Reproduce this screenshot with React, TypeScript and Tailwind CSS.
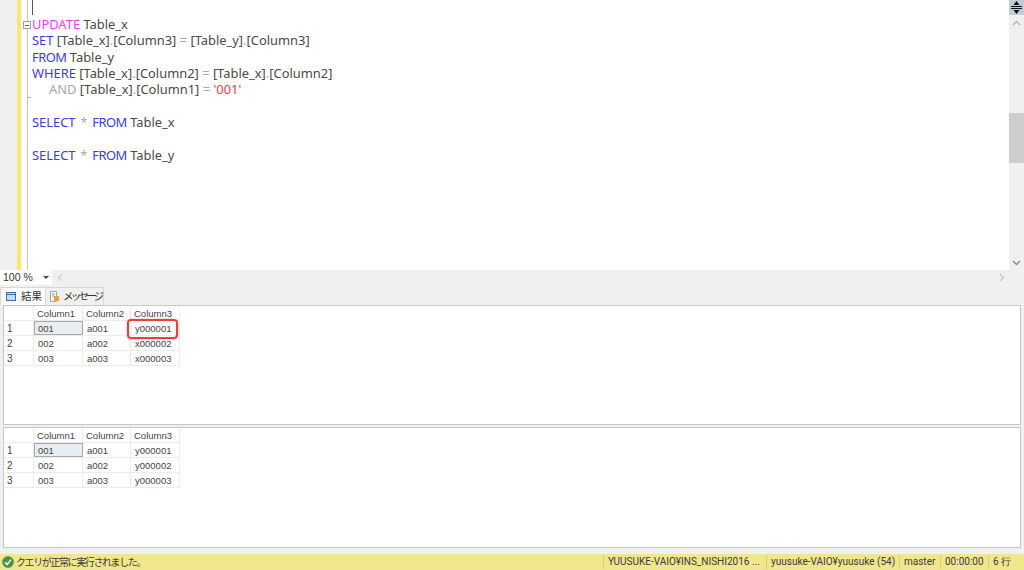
const kw = 'text-[#3a3af5]';
const plain = 'text-[#4a4a4a]';
const op = 'text-[#a8a8a8]';

function Code({ children, indent }: { children?: React.ReactNode; indent?: boolean }) {
  return <div className={`h-[16.35px] leading-[16.35px] whitespace-pre ${indent ? 'pl-[17px]' : ''}`}>{children}</div>;
}

function From() {
  return <span className={`${kw} tracking-[-0.5px]`}>FROM</span>;
}

function Editor() {
  return (
    <div className="flex h-[270px] bg-white">
      <div className="w-[17px] bg-[#f0f0f0]" />
      <div className="w-[4px] bg-[#f7e96b]" />
      <div className="relative w-[6px]">
        <div className="absolute z-10 left-[2px] top-[21px] w-[8px] h-[8px] border border-[#a0a0a0] bg-white flex items-center justify-center">
          <div className="w-[4px] h-px bg-[#606060]" />
        </div>
      </div>
      <div className="relative flex-1 border-l border-[#c4c4c4] pl-[4px] font-['Noto_Sans',sans-serif] text-[12.9px]">
        <div className="absolute left-0 top-[97px] w-[3px] h-px bg-[#b0b0b0]" />
        <div className="absolute left-[4px] top-0 w-px h-[15px] bg-[#555]" />
        <div className="h-[16px]" />
        <Code><span className="text-[#f53cf0]">UPDATE</span> <span className={plain}>Table_x</span></Code>
        <Code><span className={kw}>SET</span> <span className={plain}>[Table_x]</span><span className={op}>.</span><span className={plain}>[Column3]</span> <span className={op}>=</span> <span className={plain}>[Table_y]</span><span className={op}>.</span><span className={plain}>[Column3]</span></Code>
        <Code><From /> <span className={plain}>Table_y</span></Code>
        <Code><span className={kw}>WHERE</span> <span className={plain}>[Table_x]</span><span className={op}>.</span><span className={plain}>[Column2]</span> <span className={op}>=</span> <span className={plain}>[Table_x]</span><span className={op}>.</span><span className={plain}>[Column2]</span></Code>
        <Code indent><span className={op}>AND</span> <span className={plain}>[Table_x]</span><span className={op}>.</span><span className={plain}>[Column1]</span> <span className={op}>=</span> <span className="text-[#f53b3b]">'001'</span></Code>
        <Code />
        <Code><span className={kw}>SELECT</span> <span className={`${op} mx-[1.5px]`}>*</span> <From /> <span className={plain}>Table_x</span></Code>
        <Code />
        <Code><span className={kw}>SELECT</span> <span className={`${op} mx-[1.5px]`}>*</span> <From /> <span className={plain}>Table_y</span></Code>
      </div>
      <div className="w-[15px] bg-[#f0f0f0] flex flex-col items-center">
        <div className="h-[15px] w-full bg-[#c4ccd8] flex items-center justify-center">
          <svg width="11" height="13" viewBox="0 0 11 13"><path d="M0 5.5h11M0 7.5h11" stroke="#111" strokeWidth="1.2" /><path d="M5.5 0L2.5 4h6zM5.5 13L2.5 9h6z" fill="#111" /></svg>
        </div>
        <div className="h-[15px] w-full flex items-center justify-center">
          <svg width="9" height="6" viewBox="0 0 9 6"><path d="M1 5l3.5-3.5L8 5" stroke="#b4b4b4" strokeWidth="1.4" fill="none" /></svg>
        </div>
        <div className="h-[83px]" />
        <div className="h-[50px] w-full bg-[#cdcdcd]" />
        <div className="flex-1" />
        <div className="h-[15px] w-full flex items-center justify-center">
          <svg width="9" height="6" viewBox="0 0 9 6"><path d="M1 1l3.5 3.5L8 1" stroke="#8a8a8a" strokeWidth="1.4" fill="none" /></svg>
        </div>
      </div>
    </div>
  );
}

function ZoomBar() {
  return (
    <div className="flex h-[15px] bg-[#f0f0f0] font-['Liberation_Sans',sans-serif]">
      <div className="w-[52px] bg-white flex items-center justify-between pl-[3px] pr-[3px] text-[10.5px] text-[#333]">
        <span>100 %</span>
        <svg width="6" height="3" viewBox="0 0 6 3"><path d="M0 0h6L3 3z" fill="#444" /></svg>
      </div>
      <div className="w-[5px]" />
      <svg className="mt-[3px]" width="6" height="9" viewBox="0 0 6 9"><path d="M5 1L1.5 4.5 5 8" stroke="#d0d0d0" strokeWidth="1.2" fill="none" /></svg>
      <div className="flex-1" />
      <svg className="mt-[3px] mr-[19px]" width="6" height="9" viewBox="0 0 6 9"><path d="M1 1l3.5 3.5L1 8" stroke="#c4c4c4" strokeWidth="1.2" fill="none" /></svg>
    </div>
  );
}

function Tabs() {
  return (
    <div className="flex items-end h-[20px] font-['Noto_Sans_CJK_JP',sans-serif] text-[10.5px] text-[#333]">
      <div className="h-[18px] w-[46px] bg-white flex items-center gap-[5px] pl-[5px] border-t border-x border-[#d8d8d8]">
        <svg width="10" height="9" viewBox="0 0 10 9"><rect x="0.5" y="0.5" width="9" height="8" fill="#c9d8ee" stroke="#3f6fae" /><path d="M0.5 2.5h9" stroke="#3f6fae" /></svg>
        <span className="whitespace-nowrap pb-[2px]">結果</span>
      </div>
      <div className="h-[18px] w-[58px] bg-[#f0f0f0] flex items-center gap-[3px] pl-[3px] border-t border-r border-[#d8d8d8]">
        <svg className="shrink-0" width="11" height="11" viewBox="0 0 11 11"><path d="M1.5 0.5h6v10h-6z" fill="#fff" stroke="#9aa4b4" /><path d="M5 5h5v5H5z" fill="#e3a33c" /><path d="M3 3h3M3 5h2" stroke="#6f8fb8" /></svg>
        <span className="whitespace-nowrap tracking-[-2.8px] pb-[2px]">メッセージ</span>
      </div>
    </div>
  );
}

type Row = [string, string, string, string];

function Grid({ rows, children, className }: { rows: Row[]; children?: React.ReactNode; className: string }) {
  return (
    <div className={`relative bg-white border border-[#c8c8c8] ${className}`}>
      <div className="w-[176px] font-['Liberation_Sans',sans-serif] text-[9.5px] text-[#444]">
        <div className="flex h-[15px] items-center border-b border-[#ececec]">
          <div className="w-[30px] h-full border-r border-[#ececec]" />
          <div className="w-[49px] pl-[3px] h-full border-r border-[#ececec] leading-[15px]">Column1</div>
          <div className="w-[48px] pl-[3px] h-full border-r border-[#ececec] leading-[15px]">Column2</div>
          <div className="w-[49px] pl-[3px] h-full border-r border-[#ececec] leading-[15px]">Column3</div>
        </div>
        {rows.map((r, i) => (
          <div key={r[0]} className="flex h-[15px] items-center border-b border-[#ececec]">
            <div className="w-[30px] h-full pl-[3px] border-r border-[#ececec] leading-[15px] text-[10px]">{r[0]}</div>
            <div className={`w-[49px] h-full leading-[13px] ${i === 0 ? 'bg-[#e8edf1] border border-[#a9a9a9] pl-[3px]' : 'pl-[4px] leading-[15px] border-r border-[#ececec]'}`}>{r[1]}</div>
            <div className="w-[48px] h-full pl-[4px] border-r border-[#ececec] leading-[15px]">{r[2]}</div>
            <div className="w-[49px] h-full pl-[4px] border-r border-[#ececec] leading-[15px]">{r[3]}</div>
          </div>
        ))}
      </div>
      {children}
    </div>
  );
}

function Status() {
  const cell = 'border-l border-[#d8cf7c] pl-[4px] whitespace-nowrap';
  return (
    <div className="flex items-center h-[16px] bg-[#f0e68c] font-['Noto_Sans_CJK_JP',sans-serif] text-[10px] text-[#3c3c3c]">
      <svg className="ml-[2px] mr-[2px]" width="12" height="12" viewBox="0 0 12 12"><circle cx="6" cy="6" r="5.5" fill="#3f9a45" stroke="#5a7a5a" strokeWidth="0.6" /><path d="M3 6.2l2.1 2.2L9 3.8" stroke="#fff" strokeWidth="1.5" fill="none" /></svg>
      <span className="tracking-[-1.4px] whitespace-nowrap pb-[2px]">クエリが正常に実行されました。</span>
      <div className="flex-1" />
      <div className="flex items-center font-['Roboto',sans-serif] text-[10px] leading-[14px]">
        <span className={`${cell} w-[163px]`}>YUUSUKE-VAIO¥INS_NISHI2016 ...</span>
        <span className={`${cell} w-[133px]`}>yuusuke-VAIO¥yuusuke (54)</span>
        <span className={`${cell} w-[41px]`}>master</span>
        <span className={`${cell} w-[48px]`}>00:00:00</span>
        <span className={`${cell} w-[36px]`}>6 行</span>
      </div>
    </div>
  );
}

export default function App() {
  return (
    <div className="w-[1024px] h-[570px] overflow-hidden bg-[#f0f0f0] flex flex-col">
      <Editor />
      <ZoomBar />
      <Tabs />
      <div className="flex-1 flex flex-col gap-[2px] px-[3px] pb-[6px]">
        <Grid className="h-[120px]" rows={[['1', '001', 'a001', 'y000001'], ['2', '002', 'a002', 'x000002'], ['3', '003', 'a003', 'x000003']]}>
          <div className="absolute left-[123px] top-[13px] w-[51px] h-[20px] rounded-[4px] border-2 border-[#e8413c] shadow-[0_0_3px_rgba(200,60,60,0.4)]" />
        </Grid>
        <Grid className="flex-1" rows={[['1', '001', 'a001', 'y000001'], ['2', '002', 'a002', 'y000002'], ['3', '003', 'a003', 'y000003']]} />
      </div>
      <Status />
    </div>
  );
}
